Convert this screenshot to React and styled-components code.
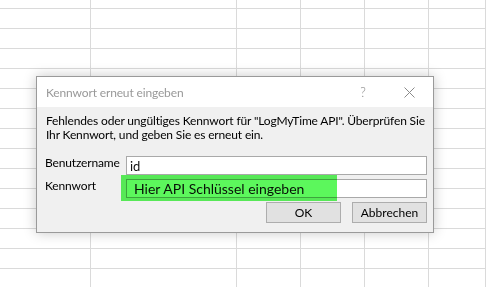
import React from "react";
import styled, { createGlobalStyle } from "styled-components";

const Global = createGlobalStyle`
  html, body { margin: 0; padding: 0; background: #fff; }
  body { font-family: Lato, "Noto Sans", sans-serif; overflow: hidden; }
  #root { width: 486px; height: 287px; }
`;

const Sheet = styled.div`
  position: relative;
  width: 486px;
  height: 287px;
  overflow: hidden;
  background: #fff;
`;

const Grid = styled.div`
  display: grid;
  grid-template-columns: 91px 146px 64px 64px 64px 1fr;
  grid-template-rows: 9px repeat(14, 20px);
`;

const Cell = styled.div`
  border-right: 1px solid #dadada;
  border-bottom: 1px solid #dadada;
`;

const Dialog = styled.div`
  position: absolute;
  left: 36px;
  top: 76px;
  width: 396px;
  height: 155px;
  border: 1px solid #9a9a9a;
  background: #f0f0f0;
  box-shadow: 0 0 12px rgba(0, 0, 0, 0.22);
  display: flex;
  flex-direction: column;
  font-size: 12px;
  letter-spacing: -0.15px;
  color: #000;
`;

const TitleBar = styled.div`
  height: 30px;
  background: #fff;
  display: flex;
  align-items: center;
  padding-left: 9px;
  padding-right: 1px;
`;

const Title = styled.div`
  flex: 1;
  color: #999;
  font-size: 12px;
`;

const TitleButton = styled.div`
  width: 46px;
  display: flex;
  justify-content: center;
  align-items: center;
  color: #8a8a8a;
  font-size: 13px;
  font-weight: 300;
`;

const Body = styled.div`
  flex: 1;
  display: flex;
  flex-direction: column;
  padding: 7px 6px 0 9px;
`;

const Message = styled.p`
  margin: 0;
  font-size: 12px;
  line-height: 14px;
  white-space: nowrap;
`;

const Form = styled.div`
  margin-top: 14px;
  display: grid;
  grid-template-columns: 81px 1fr;
  row-gap: 4px;
  margin-left: -1px;
`;

const Label = styled.label`
  font-size: 12px;
  line-height: 14px;
  white-space: nowrap;
`;

const FieldWrap = styled.div`
  position: relative;
`;

const Input = styled.div`
  height: 17px;
  border: 1px solid #a9a9a9;
  background: #fff;
  display: flex;
  align-items: center;
  padding-left: ${(p) => p.$pad || 3}px;
  font-size: ${(p) => p.$size || 13}px;
  letter-spacing: 0;
  color: #111;
  white-space: nowrap;
`;

const Highlight = styled.div`
  position: absolute;
  left: -5px;
  top: -4px;
  width: 216px;
  height: 26px;
  background: #5cf75c;
  mix-blend-mode: multiply;
  pointer-events: none;
`;

const Buttons = styled.div`
  display: flex;
  justify-content: flex-end;
  gap: 11px;
  margin-top: 4px;
`;

const Button = styled.button`
  width: 75px;
  height: 21px;
  border: 1px solid #adadad;
  background: #e1e1e1;
  font-family: inherit;
  font-size: 12px;
  color: #000;
  padding: 0;
  display: flex;
  align-items: center;
  justify-content: center;
`;

export default function App() {
  const rows = 15;
  const cols = 6;
  return (
    <>
      <Global />
      <Sheet>
        <Grid>
          {Array.from({ length: rows * cols }).map((_, i) => (
            <Cell key={i} />
          ))}
        </Grid>
        <Dialog>
          <TitleBar>
            <Title>Kennwort erneut eingeben</Title>
            <TitleButton>?</TitleButton>
            <TitleButton>
              <svg width="11" height="11" viewBox="0 0 11 11">
                <path d="M0.5 0.5 L10.5 10.5 M10.5 0.5 L0.5 10.5" stroke="#8a8a8a" strokeWidth="1" fill="none" />
              </svg>
            </TitleButton>
          </TitleBar>
          <Body>
            <Message>
              Fehlendes oder ungültiges Kennwort für "LogMyTime API". Überprüfen Sie
              <br />
              Ihr Kennwort, und geben Sie es erneut ein.
            </Message>
            <Form>
              <Label>Benutzername</Label>
              <Input>id</Input>
              <Label>Kennwort</Label>
              <FieldWrap>
                <Input $pad={7} $size={14}>Hier API Schlüssel eingeben</Input>
                <Highlight />
              </FieldWrap>
            </Form>
            <Buttons>
              <Button>OK</Button>
              <Button>Abbrechen</Button>
            </Buttons>
          </Body>
        </Dialog>
      </Sheet>
    </>
  );
}
